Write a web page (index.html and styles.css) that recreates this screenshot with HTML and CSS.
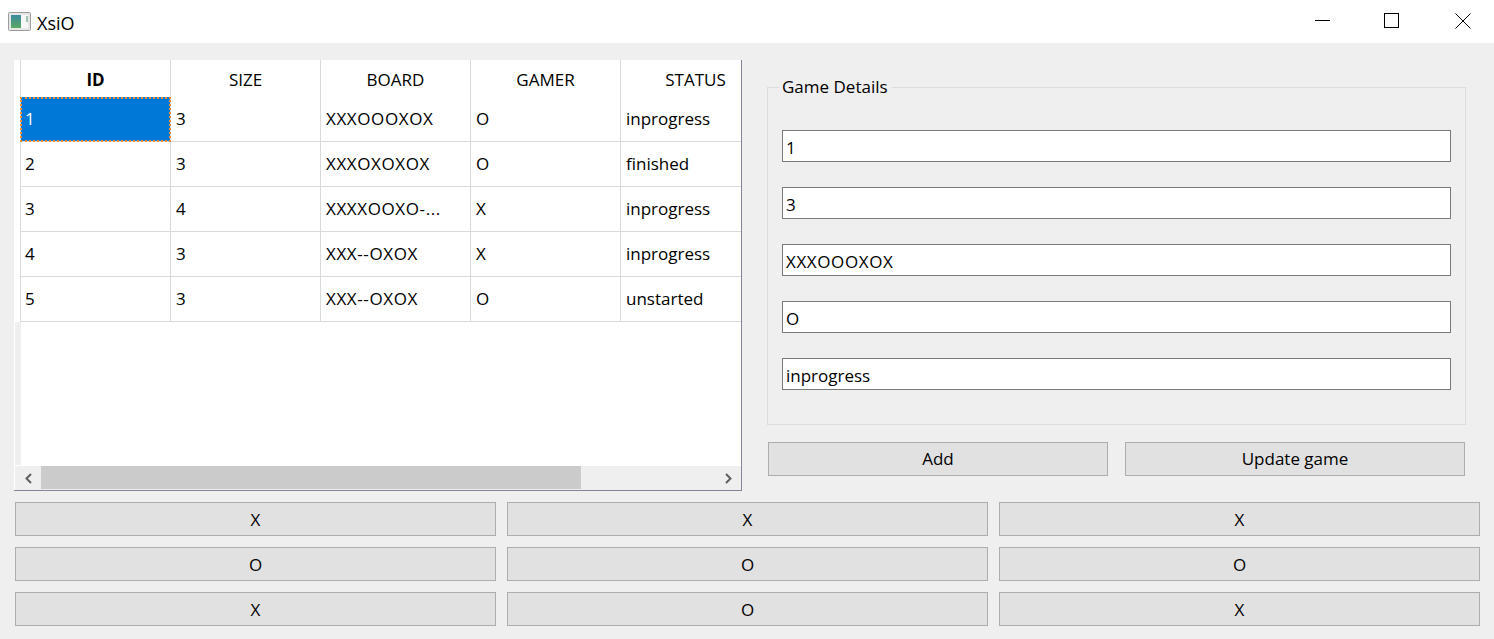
FILE: index.html
```html
<!DOCTYPE html>
<html lang="en">

<head>
    <meta charset="UTF-8">
    <meta name="viewport" content="width=device-width, initial-scale=1.0">
    <title>XsiO</title>
    <link rel="stylesheet" href="styles.css">
</head>

<body>
    <div class="titlebar">
        <svg class="app-icon" width="23" height="19" viewBox="0 0 23 19">
            <defs>
                <linearGradient id="iconFill" x1="0" y1="0" x2="0" y2="1">
                    <stop offset="0" stop-color="#3a8aa0"/>
                    <stop offset="1" stop-color="#5aa860"/>
                </linearGradient>
            </defs>
            <rect x="0.5" y="0.5" width="22" height="18" rx="1" fill="#e6e6e6" stroke="#9c9c9c"/>
            <rect x="3" y="3" width="10" height="13" fill="url(#iconFill)"/>
            <rect x="13" y="3" width="7" height="13" fill="#f6f6f6"/>
            <rect x="18" y="4" width="2" height="6" fill="#9cc4b0"/>
        </svg>
        <span class="app-title">XsiO</span>
        <div class="win-buttons">
            <svg class="win-min" width="16" height="16" viewBox="0 0 16 16"><path d="M0 7.500H15" stroke="#000" fill="none"/></svg>
            <svg class="win-max" width="16" height="16" viewBox="0 0 16 16"><rect x="1.500" y="0.500" width="14" height="14" stroke="#000" fill="none"/></svg>
            <svg width="16" height="16" viewBox="0 0 16 16"><path d="M0.500 0.500L15.500 15.500M15.500 0.500L0.500 15.500" stroke="#000" fill="none"/></svg>
        </div>
    </div>

    <div class="content">
        <div class="top-row">
            <div class="table-frame">
                <div class="table-view">
                    <div class="stub">
                        <div class="stub-head"></div>
                    </div>
                    <div class="table-clip">
                        <table class="games">
                            <tr>
                                <th class="th-id">ID</th>
                                <th>SIZE</th>
                                <th>BOARD</th>
                                <th>GAMER</th>
                                <th>STATUS</th>
                            </tr>
                            <tr>
                                <td class="selected">1</td>
                                <td>3</td>
                                <td class="code">XXXOOOXOX</td>
                                <td>O</td>
                                <td>inprogress</td>
                            </tr>
                            <tr>
                                <td>2</td>
                                <td>3</td>
                                <td class="code">XXXOXOXOX</td>
                                <td>O</td>
                                <td>finished</td>
                            </tr>
                            <tr>
                                <td>3</td>
                                <td>4</td>
                                <td class="code">XXXXOOXO-...</td>
                                <td>X</td>
                                <td>inprogress</td>
                            </tr>
                            <tr>
                                <td>4</td>
                                <td>3</td>
                                <td class="code">XXX--OXOX</td>
                                <td>X</td>
                                <td>inprogress</td>
                            </tr>
                            <tr>
                                <td>5</td>
                                <td>3</td>
                                <td class="code">XXX--OXOX</td>
                                <td>O</td>
                                <td>unstarted</td>
                            </tr>
                        </table>
                    </div>
                </div>
                <div class="hscroll">
                    <span class="arrow">
                        <svg width="9" height="11" viewBox="0 0 9 11"><path d="M7 1L2.500 5.500L7 10" stroke="#606060" stroke-width="2" fill="none"/></svg>
                    </span>
                    <div class="track"><div class="thumb"></div></div>
                    <span class="arrow">
                        <svg width="9" height="11" viewBox="0 0 9 11"><path d="M2 1L6.500 5.500L2 10" stroke="#606060" stroke-width="2" fill="none"/></svg>
                    </span>
                </div>
            </div>

            <div class="side">
                <fieldset class="details">
                    <legend>Game Details</legend>
                    <div class="field">1</div>
                    <div class="field">3</div>
                    <div class="field code">XXXOOOXOX</div>
                    <div class="field">O</div>
                    <div class="field">inprogress</div>
                </fieldset>
                <div class="actions">
                    <button class="btn">Add</button>
                    <button class="btn">Update game</button>
                </div>
            </div>
        </div>

        <div class="board">
            <button class="btn">X</button>
            <button class="btn">X</button>
            <button class="btn">X</button>
            <button class="btn">O</button>
            <button class="btn">O</button>
            <button class="btn">O</button>
            <button class="btn">X</button>
            <button class="btn">O</button>
            <button class="btn">X</button>
        </div>
    </div>
</body>

</html>
```
FILE: styles.css
```css
* {
    margin: 0;
    padding: 0;
    box-sizing: border-box;
}

html,
body {
    height: 639px;
    overflow: hidden;
}

body {
    background: #efefef;
    color: #000;
    font-family: "Open Sans", "Noto Sans", sans-serif;
    font-size: 17px;
}

.titlebar {
    display: flex;
    align-items: center;
    height: 43px;
    padding-left: 8px;
    background: #fff;
}

.app-icon {
    margin-right: 6px;
}

.app-title {
    flex: 1;
    padding-top: 2px;
    font-size: 18px;
}

.win-buttons {
    display: flex;
    align-self: flex-start;
    padding-top: 13px;
    padding-right: 23px;
}

.win-min {
    margin-right: 52px;
}

.win-max {
    margin-right: 56px;
}

.content {
    padding: 17px 14px 0 14px;
}

.top-row {
    display: flex;
    height: 431px;
}

.table-frame {
    display: flex;
    flex-direction: column;
    width: 728px;
    background: #fff;
    border-right: 1px solid #85859a;
    border-bottom: 1px solid #85859a;
}

.table-view {
    display: flex;
    flex: 1;
    min-height: 0;
}

.stub {
    flex: none;
    width: 7px;
    background: #efefef;
    border-left: 1px solid #fff;
    border-bottom: 1px solid #fff;
}

.stub-head {
    height: 262px;
    background: #fff;
}

.table-clip {
    flex: 1;
    min-width: 0;
    margin-left: -1px;
    overflow: hidden;
}

.games {
    border-collapse: separate;
    border-spacing: 0;
    table-layout: fixed;
    width: 751px;
}

.games th,
.games td {
    width: 150px;
    border-right: 1px solid #dadada;
    text-align: left;
    white-space: nowrap;
}

.games th {
    height: 37px;
    padding-top: 1px;
    font-weight: normal;
    text-align: center;
}

.games th:first-child,
.games td:first-child {
    width: 151px;
    border-left: 1px solid #dadada;
}

.games .th-id {
    font-weight: bold;
}

.games td {
    height: 45px;
    padding-left: 5px;
    padding-bottom: 2px;
    border-bottom: 1px solid #dadada;
}

.games td:first-child {
    padding-left: 4px;
}

.games .selected {
    background: #0078d7;
    color: #fff;
    outline: 2px dotted #f08a30;
    outline-offset: -2px;
}

.code {
    letter-spacing: 0.6px;
}

.hscroll {
    display: flex;
    height: 24px;
    background: #efefef;
    border-left: 1px solid #fff;
}

.arrow {
    display: flex;
    align-items: center;
    justify-content: center;
    width: 26px;
    flex: none;
}

.track {
    flex: 1;
}

.thumb {
    width: 540px;
    height: 23px;
    background: #cbcbcb;
}

.side {
    display: flex;
    flex-direction: column;
    width: 699px;
    margin-left: 25px;
}

.details {
    height: 350px;
    margin-top: 15px;
    padding: 30px 14px 0 14px;
    border: 1px solid #dcdcdc;
}

.details legend {
    margin-left: -3px;
    padding: 0 4px 2px 3px;
}

.field {
    display: flex;
    align-items: center;
    height: 32px;
    margin-bottom: 25px;
    padding-left: 3px;
    padding-top: 3px;
    background: #fff;
    border: 1px solid #7a7a7a;
}

.actions {
    display: flex;
    gap: 17px;
    margin-top: 17px;
    padding-left: 1px;
}

.btn {
    height: 34px;
    background: #e1e1e1;
    border: 1px solid #adadad;
    font: inherit;
    color: inherit;
}

.actions .btn {
    width: 340px;
    padding-bottom: 1px;
}

.board {
    display: grid;
    grid-template-columns: repeat(3, 481px);
    grid-auto-rows: 34px;
    column-gap: 11px;
    row-gap: 11px;
    margin-top: 11px;
    margin-left: 1px;
}
```
